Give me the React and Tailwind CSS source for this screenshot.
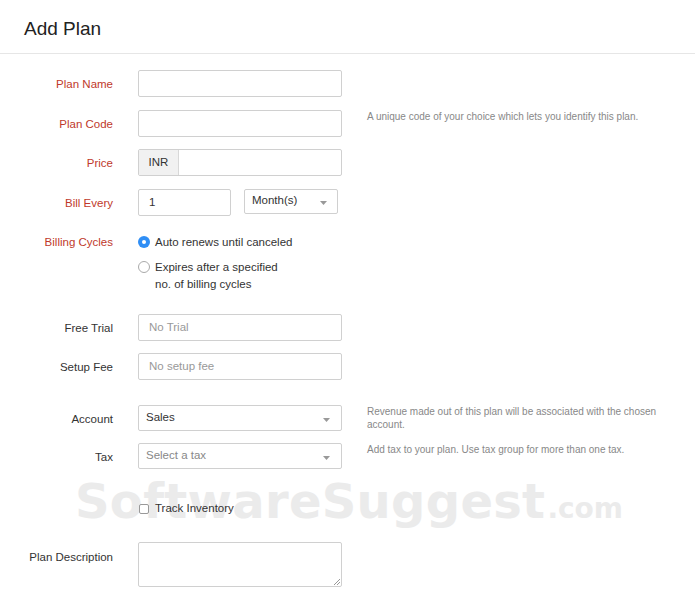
import React from 'react'

const Caret = () => (
  <svg className="w-[7px] h-[4px]" viewBox="0 0 7 4" fill="#999">
    <path d="M0 0h7L3.5 4z" />
  </svg>
)

const Row = ({ label, required, className = '', children, hint }) => (
  <div className={`flex items-start h-[27px] ${className}`}>
    <div className={`w-[113px] shrink-0 text-right text-[11.5px] ${required ? 'text-[#c0392b]' : 'text-[#333]'} leading-[27px] pt-[1px]`}>
      {label}
    </div>
    <div className="ml-[25px] w-[204px] shrink-0">{children}</div>
    {hint && <div className="ml-[25px] w-[290px] text-[10px] leading-[13px] text-[#888]">{hint}</div>}
  </div>
)

const Input = ({ placeholder, value }) => (
  <div className="h-[27px] w-full rounded-[2px] border border-[#d0d0d0] bg-white px-[10px] flex items-center text-[11.5px]">
    {value ? <span className="text-[#333]">{value}</span> : <span className="text-[#999]">{placeholder}</span>}
  </div>
)

const Select = ({ value, muted }) => (
  <div className="h-[26px] w-full rounded-[2px] border border-[#d0d0d0] bg-white pl-[7px] pr-[11px] flex items-center justify-between text-[11.5px]">
    <span className={`-mt-[1px] ${muted ? 'text-[#888]' : 'text-[#333]'}`}>{value}</span>
    <span className="mt-[3px]"><Caret /></span>
  </div>
)

export default function App() {
  return (
    <div className="relative w-[695px] h-[600px] overflow-hidden bg-white" style={{ fontFamily: '"Liberation Sans", Arial, sans-serif' }}>
      {/* watermark */}
      <div
        className="pointer-events-none absolute left-[75px] top-[477px] flex items-baseline font-bold text-[#ebebeb] whitespace-nowrap"
        style={{ fontFamily: '"DejaVu Sans", sans-serif' }}
      >
        <span className="text-[48px] leading-[48px] tracking-[0.3px]">SoftwareSuggest</span>
        <span className="text-[28px] leading-[30px] ml-[2px]">.com</span>
      </div>

      <div className="relative h-[54px] border-b border-[#e6e6e6] pl-[24px] flex items-center">
        <h1 className="text-[19px] text-[#222] font-normal pt-[6px]">Add Plan</h1>
      </div>

      <div className="relative pt-[16px]">
        <Row label="Plan Name" required>
          <Input />
        </Row>
        <Row label="Plan Code" required className="mt-[13px]" hint="A unique code of your choice which lets you identify this plan.">
          <Input />
        </Row>
        <Row label="Price" required className="mt-[12px]">
          <div className="h-[27px] w-full rounded-[2px] border border-[#d0d0d0] bg-white flex">
            <div className="w-[40px] bg-[#f1f1f1] border-r border-[#d8d8d8] flex items-center justify-center text-[11.5px] text-[#333]">INR</div>
          </div>
        </Row>
        <Row label="Bill Every" required className="mt-[13px]">
          <div className="flex items-start w-[204px]">
            <div className="w-[93px]">
              <Input value="1" />
            </div>
            <div className="ml-[13px] w-[94px] shrink-0">
              <div className="h-[25px] w-full rounded-[2px] border border-[#d0d0d0] bg-white pl-[7px] pr-[10px] flex items-center justify-between text-[11.5px] text-[#333]">
                <span className="-mt-[2px]">Month(s)</span>
                <span className="mt-[3px]"><Caret /></span>
              </div>
            </div>
          </div>
        </Row>

        <div className="flex items-start mt-[18px]">
          <div className="w-[113px] shrink-0 text-right text-[11.5px] text-[#c0392b] leading-[17px]">Billing Cycles</div>
          <div className="ml-[25px] text-[11.5px] text-[#333]">
            <div className="flex items-start leading-[17px]">
              <span className="mt-[2px] w-[12px] h-[12px] rounded-full bg-[#2f8ef5] flex items-center justify-center">
                <span className="w-[4px] h-[4px] rounded-full bg-white" />
              </span>
              <span className="ml-[5px]">Auto renews until canceled</span>
            </div>
            <div className="flex items-start leading-[17px] mt-[8px]">
              <span className="mt-[2px] w-[12px] h-[12px] rounded-full border border-[#aaa] bg-white shrink-0" />
              <span className="ml-[5px]">Expires after a specified<br />no. of billing cycles</span>
            </div>
          </div>
        </div>

        <Row label="Free Trial" className="mt-[21px]">
          <Input placeholder="No Trial" />
        </Row>
        <Row label="Setup Fee" className="mt-[12px]">
          <Input placeholder="No setup fee" />
        </Row>

        <Row label="Account" className="mt-[25px]" hint="Revenue made out of this plan will be associated with the chosen account.">
          <Select value="Sales" />
        </Row>
        <Row label="Tax" className="mt-[11px]" hint="Add tax to your plan. Use tax group for more than one tax.">
          <Select value="Select a tax" muted />
        </Row>

        <div className="flex items-center mt-[30px] pl-[139px] text-[11.5px] text-[#333] leading-[17px]">
          <span className="w-[10px] h-[10px] rounded-[2px] border border-[#999] bg-white" />
          <span className="ml-[6px]">Track Inventory</span>
        </div>

        <div className="flex items-start mt-[25px]">
          <div className="w-[113px] shrink-0 text-right text-[11.5px] text-[#333] pt-[7px]">Plan Description</div>
          <div className="ml-[25px] relative w-[204px] h-[45px] rounded-[2px] border border-[#d0d0d0] bg-white">
            <svg className="absolute right-[1px] bottom-[1px] w-[7px] h-[7px]" viewBox="0 0 7 7" stroke="#999" strokeWidth="1">
              <path d="M1 7L7 1M4 7L7 4" />
            </svg>
          </div>
        </div>
      </div>
    </div>
  )
}
